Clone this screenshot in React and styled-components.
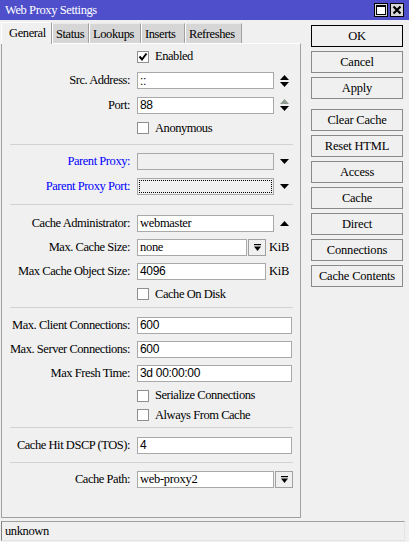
import React from 'react';
import styled, { createGlobalStyle } from 'styled-components';

const Global = createGlobalStyle`
  html, body { margin: 0; padding: 0; background: #f0f0f0; }
  body {
    font-family: "Liberation Serif", "Times New Roman", serif;
    font-size: 12px;
    color: #000;
  }
  * { box-sizing: border-box; }
`;

const Window = styled.div`
  width: 409px;
  height: 542px;
  display: flex;
  flex-direction: column;
  background: #f0f0f0;
  overflow: hidden;
`;

const TitleBar = styled.div`
  height: 20px;
  flex: none;
  background: #4f4fcb;
  color: #fff;
  display: flex;
  align-items: center;
  justify-content: space-between;
  padding: 0 5px;
`;

const Title = styled.span`
  font-size: 12.5px;
  letter-spacing: -0.4px;
  line-height: 20px;
`;

const TitleButtons = styled.div`
  display: flex;
  gap: 2px;
`;

const TitleButton = styled.div`
  width: 14px;
  height: 14px;
  background: #d8d8d8;
  border: 1px solid #000;
  display: flex;
  align-items: center;
  justify-content: center;
`;

const Body = styled.div`
  flex: 1;
  display: flex;
  padding-top: 2px;
  min-height: 0;
`;

const LeftCol = styled.div`
  width: 300px;
  margin-left: 1px;
  display: flex;
  flex-direction: column;
`;

const TabRow = styled.div`
  height: 21px;
  flex: none;
  display: flex;
  align-items: flex-end;
  position: relative;
  z-index: 1;
`;

const Tab = styled.div`
  width: ${(p) => p.$w}px;
  height: ${(p) => (p.$active ? 22 : 20)}px;
  margin-bottom: ${(p) => (p.$active ? -1 : 0)}px;
  background: ${(p) => (p.$active ? '#f0f0f0' : '#d6d6d6')};
  border-left: 1px solid #fff;
  border-top: 1px solid ${(p) => (p.$active ? '#fff' : '#ececec')};
  border-right: 1px solid #a0a0a0;
  padding-left: ${(p) => (p.$active ? 7 : 3)}px;
  padding-top: 3px;
  font-size: 12.5px;
  letter-spacing: -0.4px;
  line-height: 14px;
  white-space: nowrap;
  overflow: hidden;
`;

const Panel = styled.div`
  height: 475px;
  border-top: 1px solid #fff;
  border-left: 1px solid #a0a0a0;
  border-right: 1px solid #a0a0a0;
  border-bottom: 1px solid #a0a0a0;
  display: flex;
  flex-direction: column;
`;

const Row = styled.div`
  height: ${(p) => p.$h}px;
  flex: none;
  display: flex;
  align-items: center;
`;

const Label = styled.div`
  width: 128px;
  flex: none;
  text-align: right;
  margin-right: 7px;
  font-size: 12.5px;
  letter-spacing: -0.45px;
  white-space: nowrap;
  color: ${(p) => (p.$blue ? '#0000ff' : '#000')};
`;

const Spacer = styled.div`
  width: 135px;
  flex: none;
`;

const Field = styled.div`
  width: ${(p) => p.$w}px;
  height: 17px;
  flex: none;
  border: 1px solid #a9a9a9;
  background: ${(p) => (p.$disabled ? '#f0f0f0' : '#fff')};
  padding: 0 2px;
  display: flex;
  align-items: center;
  font-family: ${(p) =>
    p.$sans ? '"Liberation Sans", Arial, sans-serif' : '"Liberation Serif", "Times New Roman", serif'};
  font-size: ${(p) => (p.$sans ? 12 : 12.5)}px;
  letter-spacing: -0.3px;
  white-space: nowrap;
  position: relative;
`;

const FocusRing = styled.div`
  position: absolute;
  inset: 1px;
  border: 1px dotted #000;
`;

const ArrowBox = styled.div`
  width: 10px;
  margin-left: 5px;
  flex: none;
  display: flex;
  flex-direction: column;
  align-items: center;
  gap: 2px;
`;

const DropButton = styled.div`
  width: 18px;
  height: 17px;
  flex: none;
  margin-left: 1px;
  border: 1px solid #a0a0a0;
  background: #f0f0f0;
  display: flex;
  align-items: center;
  justify-content: center;
`;

const Unit = styled.span`
  margin-left: 3px;
  font-size: 12.5px;
  letter-spacing: -0.3px;
`;

const CheckBox = styled.div`
  width: 12px;
  height: 12px;
  flex: none;
  border: 1px solid #8f8f8f;
  background: #fff;
  display: flex;
  align-items: center;
  justify-content: center;
`;

const CheckLabel = styled.span`
  margin-left: 6px;
  font-size: 12.5px;
  letter-spacing: -0.45px;
  white-space: nowrap;
`;

const Separator = styled.div`
  height: 1px;
  flex: none;
  background: #d2d2d2;
  margin: ${(p) => p.$mt}px 7px ${(p) => p.$mb}px 8px;
`;

const RightCol = styled.div`
  width: 92px;
  margin-left: 10px;
  padding-top: 3px;
  display: flex;
  flex-direction: column;
`;

const Button = styled.div`
  height: 22px;
  flex: none;
  margin-top: ${(p) => p.$mt}px;
  border: 1px solid ${(p) => (p.$default ? '#000' : '#8a8a8a')};
  background: #f0f0f0;
  display: flex;
  align-items: center;
  justify-content: center;
  font-size: 12.5px;
  letter-spacing: -0.2px;
  white-space: nowrap;
`;

const StatusBar = styled.div`
  height: 20px;
  flex: none;
  margin: 3px 4px 1px 1px;
  border-top: 1px solid #a0a0a0;
  border-left: 1px solid #808080;
  border-right: 1px solid #e4e4e4;
  border-bottom: 1px solid #e4e4e4;
  padding-left: 3px;
  display: flex;
  align-items: center;
  font-size: 12.5px;
  letter-spacing: -0.4px;
`;

const UpTri = ({ color = '#000' }) => (
  <svg width="9" height="5" viewBox="0 0 9 5">
    <polygon points="4.5,0 9,5 0,5" fill={color} />
  </svg>
);
const DownTri = ({ color = '#000' }) => (
  <svg width="9" height="5" viewBox="0 0 9 5">
    <polygon points="0,0 9,0 4.5,5" fill={color} />
  </svg>
);
const DropIcon = () => (
  <svg width="7" height="7" viewBox="0 0 7 7">
    <rect x="0" y="0" width="7" height="1.2" fill="#000" />
    <polygon points="0,2.5 7,2.5 3.5,7" fill="#000" />
  </svg>
);
const CheckMark = () => (
  <svg width="10" height="10" viewBox="0 0 10 10">
    <polyline points="1.5,4.5 4,7.5 8.5,1.5" fill="none" stroke="#000" strokeWidth="2" />
  </svg>
);

const Check = ({ checked, children }) => (
  <>
    <CheckBox>{checked && <CheckMark />}</CheckBox>
    <CheckLabel>{children}</CheckLabel>
  </>
);

export default function App() {
  return (
    <>
      <Global />
      <Window>
        <TitleBar>
          <Title>Web Proxy Settings</Title>
          <TitleButtons>
            <TitleButton>
              <svg width="10" height="10" viewBox="0 0 10 10">
                <rect x="0.5" y="0.5" width="9" height="9" fill="#fff" stroke="#000" />
                <rect x="0" y="0" width="10" height="2" fill="#000" />
              </svg>
            </TitleButton>
            <TitleButton>
              <svg width="10" height="10" viewBox="0 0 10 10">
                <path d="M1.5 1.5 L8.5 8.5 M8.5 1.5 L1.5 8.5" stroke="#000" strokeWidth="2.2" />
              </svg>
            </TitleButton>
          </TitleButtons>
        </TitleBar>
        <Body>
          <LeftCol>
            <TabRow>
              <Tab $active $w={51}>General</Tab>
              <Tab $w={37}>Status</Tab>
              <Tab $w={52}>Lookups</Tab>
              <Tab $w={44}>Inserts</Tab>
              <Tab $w={57}>Refreshes</Tab>
            </TabRow>
            <Panel>
              <Row $h={25}>
                <Spacer />
                <Check checked>Enabled</Check>
              </Row>
              <Row $h={23}>
                <Label>Src. Address:</Label>
                <Field $w={137} $sans>::</Field>
                <ArrowBox>
                  <UpTri />
                  <DownTri />
                </ArrowBox>
              </Row>
              <Row $h={26}>
                <Label>Port:</Label>
                <Field $w={137} $sans>88</Field>
                <ArrowBox>
                  <UpTri color="#8e9a8e" />
                  <DownTri />
                </ArrowBox>
              </Row>
              <Row $h={20}>
                <Spacer />
                <Check>Anonymous</Check>
              </Row>
              <Separator $mt={6} $mb={4} />
              <Row $h={25}>
                <Label $blue>Parent Proxy:</Label>
                <Field $w={137} $disabled />
                <ArrowBox>
                  <DownTri />
                </ArrowBox>
              </Row>
              <Row $h={24}>
                <Label $blue>Parent Proxy Port:</Label>
                <Field $w={137} $disabled>
                  <FocusRing />
                </Field>
                <ArrowBox>
                  <DownTri />
                </ArrowBox>
              </Row>
              <Separator $mt={6} $mb={5} />
              <Row $h={26}>
                <Label>Cache Administrator:</Label>
                <Field $w={137}>webmaster</Field>
                <ArrowBox>
                  <UpTri />
                </ArrowBox>
              </Row>
              <Row $h={23}>
                <Label>Max. Cache Size:</Label>
                <Field $w={110}>none</Field>
                <DropButton>
                  <DropIcon />
                </DropButton>
                <Unit>KiB</Unit>
              </Row>
              <Row $h={24}>
                <Label>Max Cache Object Size:</Label>
                <Field $w={129} $sans>4096</Field>
                <Unit>KiB</Unit>
              </Row>
              <Row $h={22}>
                <Spacer />
                <Check>Cache On Disk</Check>
              </Row>
              <Separator $mt={2} $mb={5} />
              <Row $h={24}>
                <Label>Max. Client Connections:</Label>
                <Field $w={155} $sans>600</Field>
              </Row>
              <Row $h={24}>
                <Label>Max. Server Connections:</Label>
                <Field $w={155} $sans>600</Field>
              </Row>
              <Row $h={24}>
                <Label>Max Fresh Time:</Label>
                <Field $w={155} $sans>3d 00:00:00</Field>
              </Row>
              <Row $h={21}>
                <Spacer />
                <Check>Serialize Connections</Check>
              </Row>
              <Row $h={18}>
                <Spacer />
                <Check>Always From Cache</Check>
              </Row>
              <Separator $mt={3} $mb={5} />
              <Row $h={24}>
                <Label>Cache Hit DSCP (TOS):</Label>
                <Field $w={155} $sans>4</Field>
              </Row>
              <Separator $mt={5} $mb={4} />
              <Row $h={24}>
                <Label>Cache Path:</Label>
                <Field $w={137}>web-proxy2</Field>
                <DropButton>
                  <DropIcon />
                </DropButton>
              </Row>
            </Panel>
          </LeftCol>
          <RightCol>
            <Button $default $mt={0}>OK</Button>
            <Button $mt={4}>Cancel</Button>
            <Button $mt={4}>Apply</Button>
            <Button $mt={10}>Clear Cache</Button>
            <Button $mt={4}>Reset HTML</Button>
            <Button $mt={4}>Access</Button>
            <Button $mt={4}>Cache</Button>
            <Button $mt={4}>Direct</Button>
            <Button $mt={4}>Connections</Button>
            <Button $mt={4}>Cache Contents</Button>
          </RightCol>
        </Body>
        <StatusBar>unknown</StatusBar>
      </Window>
    </>
  );
}
